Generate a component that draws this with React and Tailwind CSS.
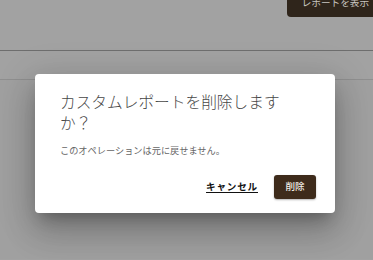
import React from "react";

export default function App() {
  const jp = { fontFamily: 'Roboto, "Noto Sans CJK JP", sans-serif' };
  return (
    <div
      className="relative w-[373px] h-[260px] overflow-hidden bg-[#a2a2a2]"
      style={jp}
    >
      {/* page underneath (dimmed) */}
      <div className="flex flex-col">
        <div className="h-[50px] flex justify-end items-start">
          <button className="-mt-[10px] -mr-[11px] h-[27px] px-[15px] flex items-center rounded-bl-[4px] bg-[#2f251b] text-[#c9c5c0] text-[9.6px] whitespace-nowrap">
            レポートを表示
          </button>
        </div>
        <div className="h-[29px] border-t border-[#6e6e6e]" />
        <div className="h-[180px] border-t border-[#8f8f8f] bg-[#a0a0a0]" />
      </div>

      {/* overlay + dialog */}
      <div className="absolute inset-0 pt-[74px] pl-[35px]">
        <div className="w-[300px] h-[139px] bg-white rounded-[4px] flex flex-col shadow-[0_10px_14px_-6px_rgba(0,0,0,0.26),0_20px_32px_2px_rgba(0,0,0,0.16),0_7px_37px_6px_rgba(0,0,0,0.12)]">
          <div className="pt-[18px] px-[25px]">
            <h2 className="text-[15.7px] leading-[21px] text-[#474747] font-light">
              カスタムレポートを削除しますか？
            </h2>
            <p className="mt-[10px] text-[9.2px] leading-[14px] text-[#666666]">
              このオペレーションは元に戻せません。
            </p>
          </div>
          <div className="mt-auto pb-[14px] pr-[19px] flex justify-end items-center gap-[16px]">
            <button className="text-[9.6px] font-bold tracking-[0.8px] text-[#111111] underline decoration-1 underline-offset-[2px] leading-[14px]">
              キャンセル
            </button>
            <button className="h-[24px] w-[42px] flex items-center justify-center rounded-[3px] bg-[#3e2b1b] text-[#f3eee8] text-[9.6px] font-medium shadow-[0_1px_2px_rgba(0,0,0,0.3)]">
              削除
            </button>
          </div>
        </div>
      </div>
    </div>
  );
}
